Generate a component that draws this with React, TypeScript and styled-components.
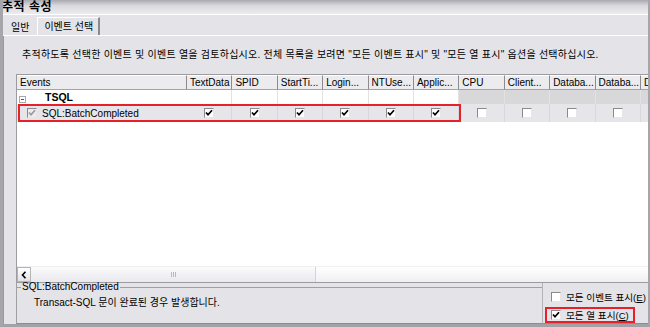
import {FC} from 'react'
import styled, {createGlobalStyle} from 'styled-components'

const GlobalStyle = createGlobalStyle`
  body {
    margin: 0;
    font-family: "Liberation Sans", "Noto Sans CJK KR", sans-serif;
    font-size: 10px;
    color: #000;
  }
`

const COLS = ['TextData', 'SPID', 'StartTi...', 'Login...', 'NTUse...', 'Applic...', 'CPU', 'Client...', 'Databa...', 'Databa...', 'D']
const CHECKED = 6
const TEMPLATE = `170px repeat(${COLS.length}, 45.4px)`

const Check: FC<{ checked?: boolean, disabled?: boolean }> = ({checked, disabled}) => (
   <CheckBox disabled={disabled}>
      {checked && (
         <svg width="8" height="8" viewBox="0 0 8 8">
            <polyline points="1,3.5 3,5.8 7,1.2" fill="none" stroke={disabled ? '#9a9a9a' : '#000'} strokeWidth="1.7"/>
         </svg>
      )}
   </CheckBox>
)

const App: FC = () => {
   return (
      <>
         <GlobalStyle/>
         <Window>
            <TitleBar>추적 속성</TitleBar>
            <TabStrip>
               <Tab>일반</Tab>
               <Tab active>이벤트 선택</Tab>
            </TabStrip>
            <Panel>
               <Instruction>
                  추적하도록 선택한 이벤트 및 이벤트 열을 검토하십시오. 전체 목록을 보려면 "모든 이벤트 표시" 및 "모든 열 표시" 옵션을 선택하십시오.
               </Instruction>
               <ListView>
                  <Row kind="header">
                     <HeaderCell>Events</HeaderCell>
                     {COLS.map((c, i) => <HeaderCell key={i}>{c}</HeaderCell>)}
                  </Row>
                  <Row kind="category">
                     <EventCell>
                        <Expander/>
                        <CategoryName>TSQL</CategoryName>
                     </EventCell>
                     {COLS.map((_, i) => <Cell key={i} shade={i >= CHECKED}/>)}
                  </Row>
                  <Row kind="event">
                     <EventCell indent>
                        <Check checked disabled/>
                        <span>SQL:BatchCompleted</span>
                     </EventCell>
                     {COLS.map((_, i) => (
                        <Cell key={i} center>
                           <Check checked={i < CHECKED}/>
                        </Cell>
                     ))}
                     <Highlight/>
                  </Row>
                  <ListBody/>
                  <ScrollBar>
                     <ScrollButton>
                        <svg width="6" height="8" viewBox="0 0 6 8">
                           <polyline points="4.5,0.8 1.5,4 4.5,7.2" fill="none" stroke="#000" strokeWidth="1.6"/>
                        </svg>
                     </ScrollButton>
                     <ScrollThumb>
                        <Grip/>
                     </ScrollThumb>
                     <ScrollTrack/>
                  </ScrollBar>
               </ListView>
               <BottomArea>
                  <Description>
                     <GroupTitle>SQL:BatchCompleted</GroupTitle>
                     <DescText>Transact-SQL 문이 완료된 경우 발생합니다.</DescText>
                  </Description>
                  <Options>
                     <Option>
                        <Check/>
                        <span>모든 이벤트 표시(<u>E</u>)</span>
                     </Option>
                     <Option highlighted>
                        <Check checked/>
                        <span>모든 열 표시(<u>C</u>)</span>
                     </Option>
                  </Options>
               </BottomArea>
            </Panel>
         </Window>
      </>
   )
}

export default App

const Window = styled.div`
  width: 650px;
  height: 327px;
  box-sizing: border-box;
  display: flex;
  flex-direction: column;
  background: #e4e4e8;
  border-left: 3px solid #a6a6aa;
  border-right: 2px solid #a6a6aa;
  border-bottom: 3px solid #a2a2a6;
  overflow: hidden;
`

const TitleBar = styled.div`
  height: 14px;
  flex-shrink: 0;
  margin-left: -1px;
  font-size: 12px;
  font-weight: bold;
  line-height: 14px;
  letter-spacing: 0.5px;
  background: linear-gradient(#a9a9b0, #d9d9de 40%, #ececf0);
  border-bottom: 1px solid #ffffff;
`

const TabStrip = styled.div`
  height: 20px;
  flex-shrink: 0;
  display: flex;
  align-items: flex-end;
  padding-left: 2px;
  border-bottom: 1px solid #ffffff;
`

const Tab = styled.div<{ active?: boolean }>`
  height: ${p => p.active ? 18 : 16}px;
  line-height: ${p => p.active ? 17 : 15}px;
  padding: 0 ${p => p.active ? 5 : 6}px 0 ${p => p.active ? 6 : 5}px;
  font-size: 10px;
  box-sizing: border-box;
  border-top: 1px solid ${p => p.active ? '#ffffff' : 'transparent'};
  border-left: 1px solid ${p => p.active ? '#ffffff' : 'transparent'};
  border-right: 2px solid ${p => p.active ? '#8a8a8e' : 'transparent'};
`

const Panel = styled.div`
  flex: 1;
  display: flex;
  flex-direction: column;
  padding-left: 12px;
  border-left: 1px solid #9a9a9e;
  min-height: 0;
`

const Instruction = styled.div`
  height: 38px;
  flex-shrink: 0;
  padding-left: 6px;
  line-height: 38px;
  font-size: 10px;
  letter-spacing: 0.25px;
  white-space: nowrap;
  overflow: hidden;
`

const ListView = styled.div`
  height: 207px;
  flex-shrink: 0;
  display: flex;
  flex-direction: column;
  border: 1px solid #9c9ca0;
  border-right: none;
  background: #ffffff;
  overflow: hidden;
`

const Row = styled.div<{ kind: 'header' | 'category' | 'event' }>`
  position: relative;
  display: grid;
  grid-template-columns: ${TEMPLATE};
  flex-shrink: 0;
  height: ${p => p.kind === 'header' ? 15 : p.kind === 'category' ? 14 : 18}px;
  background: ${p => p.kind === 'event' ? '#e6e6ea' : '#ffffff'};
`

const HeaderCell = styled.div`
  box-sizing: border-box;
  padding-left: 3px;
  line-height: 14px;
  white-space: nowrap;
  overflow: hidden;
  background: #ececee;
  border-top: 1px solid #ffffff;
  border-bottom: 1px solid #a4a4a8;
  border-right: 1px solid #8c8c90;
`

const EventCell = styled.div<{ indent?: boolean }>`
  display: flex;
  align-items: center;
  gap: ${p => p.indent ? 5 : 19}px;
  padding-left: ${p => p.indent ? 10 : 2}px;
  white-space: nowrap;
`

const Cell = styled.div<{ shade?: boolean, center?: boolean }>`
  display: flex;
  align-items: center;
  justify-content: center;
  background: ${p => p.shade ? '#d8d8da' : 'transparent'};
  border-right: 1px solid ${p => p.center ? '#d8d8dc' : '#e2e2e4'};
`

const Expander = styled.span`
  width: 7px;
  height: 7px;
  box-sizing: border-box;
  border: 1px solid #a8a8ac;
  position: relative;
  margin-top: 4px;

  &:after {
    content: '';
    position: absolute;
    left: 1px;
    top: 2px;
    width: 3px;
    height: 1px;
    background: #555;
  }
`

const CategoryName = styled.span`
  font-weight: bold;
  font-size: 10.5px;
`

const CheckBox = styled.span<{ disabled?: boolean }>`
  width: 10px;
  height: 10px;
  box-sizing: border-box;
  display: inline-flex;
  align-items: center;
  justify-content: center;
  flex-shrink: 0;
  background: ${p => p.disabled ? '#ececec' : '#ffffff'};
  border-top: 1px solid #8a8a8e;
  border-left: 1px solid #8a8a8e;
  border-bottom: 1px solid #e6e6e8;
  border-right: 1px solid #e6e6e8;
`

const Highlight = styled.div`
  position: absolute;
  left: 1px;
  top: 0;
  width: 443px;
  height: 18px;
  box-sizing: border-box;
  border: 2px solid #e8202a;
  pointer-events: none;
`

const ListBody = styled.div`
  flex: 1;
  background: #ffffff;
`

const ScrollBar = styled.div`
  height: 15px;
  flex-shrink: 0;
  display: flex;
  background: linear-gradient(#ffffff, #ececf0);
  border-top: 1px solid #f0f0f0;
`

const ScrollButton = styled.div`
  width: 14px;
  box-sizing: border-box;
  display: flex;
  align-items: center;
  justify-content: center;
  background: linear-gradient(#ffffff, #e2e2e6);
  border: 1px solid #b4b4b8;
`

const ScrollThumb = styled.div`
  width: 284px;
  display: flex;
  align-items: center;
  justify-content: center;
  background: linear-gradient(#fbfbfd, #e8e8ee);
  border-right: 1px solid #d4d4d8;
`

const Grip = styled.span`
  width: 5px;
  height: 5px;
  background: repeating-linear-gradient(90deg, #b8b8c0 0 1px, transparent 1px 2px);
`

const ScrollTrack = styled.div`
  flex: 1;
  background: linear-gradient(#ffffff, #efeff2);
`

const BottomArea = styled.div`
  flex: 1;
  display: flex;
  min-height: 0;
`

const Description = styled.div`
  width: 527px;
  box-sizing: border-box;
  display: flex;
  flex-direction: column;
  border-left: 1px solid #a0a0a4;
  border-right: 1px solid #b4b4b8;
  border-bottom: 1px solid #8c8c90;
`

const GroupTitle = styled.div`
  display: flex;
  align-items: center;
  gap: 1px;
  height: 12px;
  margin-top: -2px;
  line-height: 12px;
  white-space: nowrap;

  &:before {
    content: '';
    width: 4px;
    height: 1px;
    background: #a0a0a4;
  }

  &:after {
    content: '';
    flex: 1;
    height: 1px;
    background: #a0a0a4;
  }
`

const DescText = styled.div`
  padding: 3px 0 0 17px;
  line-height: 13px;
`

const Options = styled.div`
  flex: 1;
  display: flex;
  flex-direction: column;
  justify-content: flex-end;
  padding: 0 0 0 2px;
  border-bottom: 1px solid #8c8c90;
`

const Option = styled.label<{ highlighted?: boolean }>`
  display: flex;
  align-items: center;
  gap: 5px;
  height: 16px;
  width: 90px;
  box-sizing: border-box;
  padding-left: ${p => p.highlighted ? 4 : 6}px;
  font-size: 9.6px;
  white-space: nowrap;
  border: ${p => p.highlighted ? '2px solid #e8202a' : 'none'};
  margin-top: ${p => p.highlighted ? 2 : 0}px;
`
